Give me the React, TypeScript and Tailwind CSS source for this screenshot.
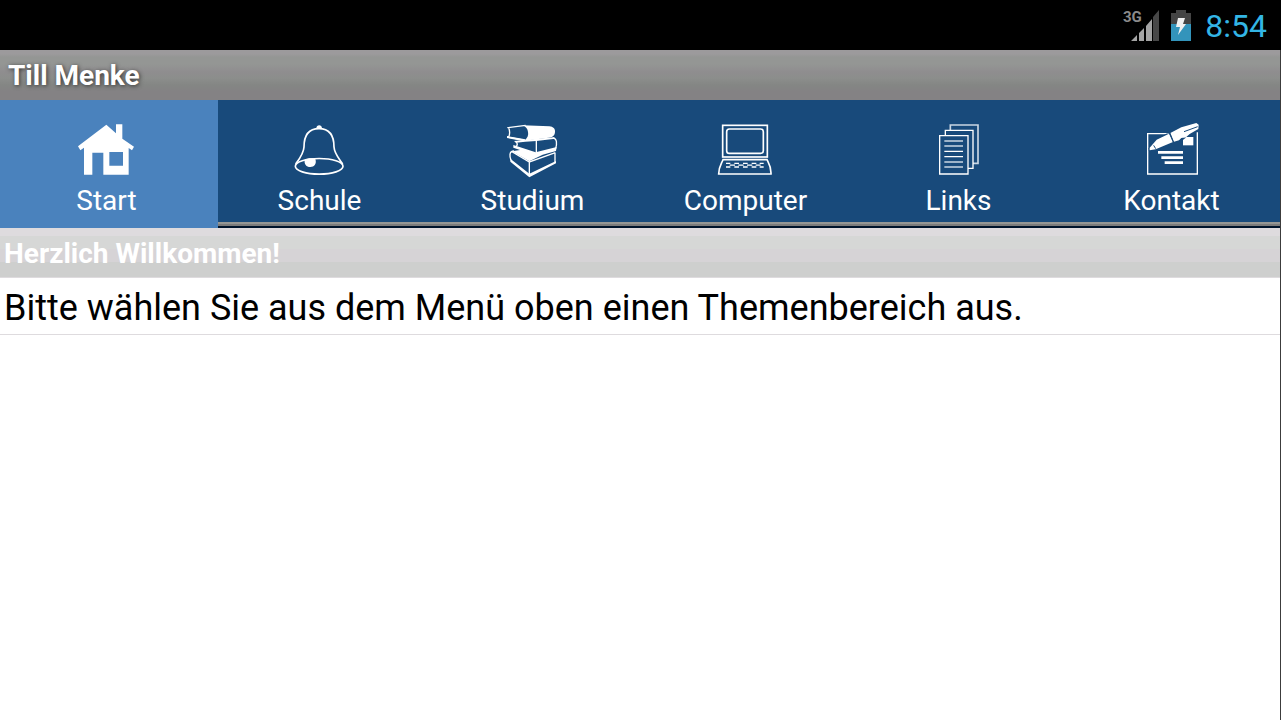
import { useState, type ReactNode } from "react";

type Tab = { label: string; viewBox: string; art: ReactNode };

const NAVY = "#184a7b";

const tabs: Tab[] = [
  {
    label: "Start",
    viewBox: "45 24 189 192",
    art: (
      <path
        fill="#fff"
        fillRule="evenodd"
        d="M139 44 168 70V43H187V86L222 110 216 121 206 114V194H130V128H97V194H72V113L61 121 54 109ZM148 126V167H189V126Z"
      />
    ),
  },
  {
    label: "Schule",
    viewBox: "54 9 189 192",
    art: (
      <>
        <g fill="none" stroke="#fff" strokeWidth="5">
          <path d="M77 147C88 132 101 116 102 96C102 64 114 41 147 41C181 41 192 64 192 96C193 116 208 132 218 147" />
          <ellipse cx="147.500" cy="154" rx="71.500" ry="23.500" />
        </g>
        <path fill="#fff" d="M139 40C139 28 156 28 156 40ZM104 134C108 130 129 128 136 132C141 146 133 156 121 156C109 156 102 147 104 134Z" />
      </>
    ),
  },
  {
    label: "Studium",
    viewBox: "33 9 189 192",
    art: (
      <>
        <path fill="#fff" d="M98 31 178 34C190 35 196 42 195 50C195 61 187 67 176 68L103 77C113 69 116 60 114 51C113 42 108 36 98 31Z" />
        <path fill="none" stroke="#fff" strokeWidth="4" d="M107 31 52 38M56 38C60 48 60 57 56 66M52 66 106 76" />
        <path fill="#fff" d="M51 63 106 73 101 79 51 69Z" />
        <path fill="#fff" d="M72 78 100 76 140 71 192 67 196 71 139 78 106 80 78 83Z" />
        <path fill="none" stroke="#fff" strokeWidth="4" d="M78 80C83 85 82 91 78 95M139 77V114M188 69C202 70 201 86 197 101" />
        <path fill="#fff" d="M70 90 137 112 200 96 198 108 158 119 118 139 66 109 90 105 70 98Z" />
        <path fill="none" stroke="#fff" strokeWidth="4" d="M72 108C56 108 59 126 63 136M66 110 118 141 196 113M118 139V181M195 113V142" />
        <path fill="#fff" d="M61 131 118 176 198 138V145L118 187 61 140Z" />
      </>
    ),
  },
  {
    label: "Computer",
    viewBox: "27 9 189 192",
    art: (
      <g fill="none" stroke="#fff" strokeWidth="5">
        <rect x="53" y="31" width="134" height="95" />
        <rect x="65" y="42" width="110" height="73" rx="8" />
        <path d="M54 134H186C190 143 199 153 198 177H41C41 155 50 145 54 134Z" />
        <path
          strokeWidth="4"
          d="M63 145H76M88 145H102M114 145H128M140 145H154M164 145H176M63 156H76M88 156H102M114 156H128M140 156H154M164 156H176M74 150.500H90M100 150.500H116M126 150.500H142M152 150.500H167"
        />
      </g>
    ),
  },
  {
    label: "Links",
    viewBox: "6 9 189 192",
    art: (
      <g fill={NAVY} stroke="#fff" strokeWidth="4">
        <path stroke="#c9d6e3" strokeWidth="5" d="M76 30H159V145H76Z" />
        <path d="M61 46H144V160H61Z" />
        <path d="M44 62H129V177H44Z" />
        <path strokeWidth="5" stroke="#c9d6e3" d="M58 78H114M58 93H114M58 141H114M58 156H114" />
        <path d="M58 109H114M58 125H114" />
      </g>
    ),
  },
  {
    label: "Kontakt",
    viewBox: "15 9 189 192",
    art: (
      <>
        <path fill="none" stroke="#fff" strokeWidth="4" d="M100 56H38V177H187V52" />
        <path fill={NAVY} d="M41 100 58 74 98 54V84L62 108 41 107Z" />
        <path fill="#fff" d="M144 66H175V91H144Z" />
        <path fill={NAVY} d="M137 67H154L143 76H134Z" />
        <path fill="#fff" d="M44 98 65 74 102 56 114 81 62 103 44 106ZM106 54 139 37 184 24 191 29 190 42 164 57 153 67 139 69 132 76 117 80Z" />
        <path fill="none" stroke={NAVY} strokeWidth="3" d="M104 54 115 82M147 50 188 35M56 91 62 101" />
        <path fill="none" stroke="#fff" strokeWidth="8" d="M69 112H144M79 128H144M89 143H144" />
      </>
    ),
  },
];

function StatusBar() {
  return (
    <header className="flex h-[50px] items-center justify-end bg-black pr-[14px] text-[#33b5e5]">
      <svg className="mr-3 h-9 w-[37px]" viewBox="0 0 37 36" role="img" aria-label="Mobilfunk">
        <path fill="#a4a4a4" d="M9 34 15 28V34ZM17 26 22 21V34H17ZM24 19 30 12V34H24Z" />
        <path fill="#484848" d="M31 10 37 3V34H31Z" />
        <text x="1" y="15" fill="#8a8a8a" fontFamily="Roboto, sans-serif" fontSize="15" fontWeight="700">
          3G
        </text>
      </svg>
      <svg className="mr-[14px] h-9 w-5" viewBox="0 0 20 36" role="img" aria-label="Akku">
        <path fill="#444" d="M5 3H15V6H20V18H0V6H5Z" />
        <path fill="#3394bb" d="M0 17H20V34H0Z" />
        <path fill="#f1f1f1" d="M7 11H14L12 17H15L7 28 9 20H5Z" />
      </svg>
      <time className="pt-[2px] text-[32px] leading-[48px]">8:54</time>
    </header>
  );
}

export default function App() {
  const [active, setActive] = useState("Start");

  return (
    <div className="flex min-h-screen flex-col bg-white font-[Roboto,sans-serif]">
      <StatusBar />
      <div className="flex-1 border-r border-[#3c3c3c]">
        <h1 className="h-[50px] bg-[linear-gradient(#9c9a9c_4px,#949694_7px,#949694_14px,#8f8d8f_22px,#8c8e8c_28px,#848684_35px,#848284_42px)] pt-[2px] pl-2 text-[28px] leading-[48px] font-bold text-white [text-shadow:1px_1px_4px_#333]">
          Till Menke
        </h1>
        <nav className="grid h-32 grid-cols-6 bg-[linear-gradient(#184a7b_122px,#949694_122px,#949694_124px,#7b7b7b_124px,#7b7b7b_126px,#00142b_126px)] pr-[2px]">
          {tabs.map((tab) => (
            <button
              key={tab.label}
              type="button"
              onClick={() => setActive(tab.label)}
              aria-current={tab.label === active ? "page" : undefined}
              className={
                tab.label === active
                  ? "-mr-[5px] flex flex-col items-center bg-[#4a82bd] pt-[18px] pr-[5px]"
                  : "flex flex-col items-center pt-[18px]"
              }
            >
              <svg className="h-16 w-[63px]" viewBox={tab.viewBox} aria-hidden="true">
                {tab.art}
              </svg>
              <span className="text-[28px] leading-[38px] text-white">{tab.label}</span>
            </button>
          ))}
        </nav>
        <main>
          <h2 className="h-[50px] border-b border-[#dedbde] bg-[linear-gradient(#dedbde_8px,#d6d7d6_8px,#d6d7d6_21px,#d6d3d6_21px,#d6d3d6_34px,#cecfce_34px)] pt-[2px] pl-1 text-[28px] leading-[48px] font-bold text-white">
            Herzlich Willkommen!
          </h2>
          <p className="border-b border-[#dedbde] pt-1 pl-1 text-[36px] leading-[52px] text-black">
            Bitte wählen Sie aus dem Menü oben einen Themenbereich aus.
          </p>
        </main>
      </div>
    </div>
  );
}
